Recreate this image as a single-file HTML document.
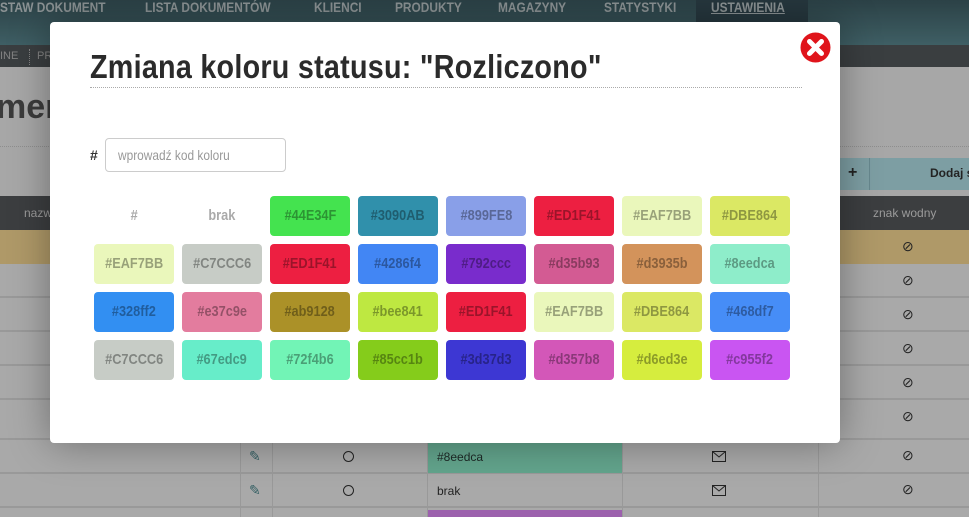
<!DOCTYPE html>
<html><head><meta charset="utf-8">
<style>
*{margin:0;padding:0;box-sizing:border-box}
html,body{width:969px;height:517px;overflow:hidden}
body{position:relative;background:#efefef;font-family:"Liberation Sans",sans-serif}
.abs{position:absolute}
.nav{left:0;top:0;width:969px;height:45px;background:linear-gradient(#3f5e65,#5a8890)}
.nav span{position:absolute;top:-3px;color:#c8d2d4;font-size:14px;font-weight:bold;transform:scaleX(.85);transform-origin:left;white-space:nowrap;line-height:20px}
.sub{left:0;top:45px;width:969px;height:22px;background:#54595c}
.row{left:0;width:969px;height:34px;border-bottom:2px solid #dcdcdc;background:#f2f2f2}
.vl{top:440px;width:1px;height:77px;background:#dcdcdc}
.modal{left:50px;top:22px;width:790px;height:421px;background:#fff;border-radius:4px;box-shadow:0 0 40px rgba(0,0,0,.35),0 0 0 1500px rgba(0,0,0,.3)}
h1{position:absolute;left:40px;top:26px;font-size:33px;color:#2b2b2b;font-weight:bold;transform:scaleX(.87);transform-origin:left;white-space:nowrap;letter-spacing:.3px}
.hr{left:40px;top:65px;width:712px;border-top:1px dotted #aaa}
.sw{position:absolute;width:80px;height:40px;border-radius:4px;text-align:center;line-height:40px;font-size:15px;font-weight:bold;color:rgba(0,0,0,.35);white-space:nowrap}
.sw b{display:inline-block;transform:scaleX(.85)}
.ic{position:absolute;color:#333;font-size:14px}
</style></head><body>
<div class="abs nav">
<span style="left:0">STAW DOKUMENT</span>
<span style="left:145px">LISTA DOKUMENTÓW</span>
<span style="left:314px">KLIENCI</span>
<span style="left:395px">PRODUKTY</span>
<span style="left:498px">MAGAZYNY</span>
<span style="left:604px">STATYSTYKI</span>
<div class="abs" style="left:696px;top:0;width:112px;height:22px;background:#37505a"></div>
<span style="left:711px;text-decoration:underline">USTAWIENIA</span>
</div>
<div class="abs sub"><span class="abs" style="left:0;top:5px;color:#bbb;font-size:11px">INE</span><div class="abs" style="left:29px;top:4px;height:16px;border-left:1px dotted #bbb"></div><span class="abs" style="left:37px;top:5px;color:#bbb;font-size:11px">PR</span></div>
<div class="abs" style="left:-4px;top:88px;font-size:34px;font-weight:bold;color:#555">ment</div>
<div class="abs" style="left:0;top:146px;width:969px;border-top:1px dotted #ccc"></div>
<div class="abs" style="left:840px;top:158px;width:129px;height:32px;background:#b4e2ea"></div>
<div class="abs" style="left:848px;top:164px;font-size:16px;font-weight:bold;color:#333">+</div>
<div class="abs" style="left:869px;top:158px;height:32px;border-left:1px solid #94c2ca"></div>
<div class="abs" style="left:930px;top:166px;font-size:12px;font-weight:bold;color:#333;white-space:nowrap">Dodaj s</div>
<div class="abs" style="left:0;top:196px;width:969px;height:34px;background:#56595c"></div>
<div class="abs" style="left:24px;top:206px;font-size:12px;color:#ddd">nazw</div>
<div class="abs" style="left:873px;top:206px;font-size:12px;color:#ddd">znak wodny</div>
<div class="abs" style="left:0;top:230px;width:969px;height:34px;background:#fbdc96"></div>
<div class="abs row" style="top:264px"></div><div class="abs row" style="top:298px"></div><div class="abs row" style="top:332px"></div><div class="abs row" style="top:366px"></div><div class="abs row" style="top:400px"></div><div class="abs row" style="top:406px;height:34px"></div>
<div class="abs row" style="top:440px"></div><div class="abs row" style="top:474px"></div><div class="abs row" style="top:508px;height:9px;border:0"></div>
<div class="abs" style="left:427px;top:440px;width:195px;height:33px;background:#8eedca"></div>
<div class="abs" style="left:427px;top:510px;width:195px;height:7px;background:#e08cf8"></div>
<div class="abs vl" style="left:240px"></div><div class="abs vl" style="left:272px"></div><div class="abs vl" style="left:427px"></div><div class="abs vl" style="left:622px"></div><div class="abs vl" style="left:818px"></div>
<div class="ic" style="left:249px;top:448px;color:#4d8a90">✎</div><div class="ic" style="left:249px;top:482px;color:#4d8a90">✎</div>
<div class="abs" style="left:343px;top:451px;width:11px;height:11px;border:1.5px solid #333;border-radius:50%"></div>
<div class="abs" style="left:343px;top:485px;width:11px;height:11px;border:1.5px solid #333;border-radius:50%"></div>
<div class="abs" style="left:437px;top:450px;font-size:12px;color:#2b3d38">#8eedca</div>
<div class="abs" style="left:437px;top:484px;font-size:12px;color:#333">brak</div>
<svg class="abs" style="left:712px;top:451px" width="14" height="11"><rect x=".5" y=".5" width="13" height="10" fill="none" stroke="#333"/><path d="M.5 .5L7 6L13.5 .5" fill="none" stroke="#333"/></svg>
<svg class="abs" style="left:712px;top:485px" width="14" height="11"><rect x=".5" y=".5" width="13" height="10" fill="none" stroke="#333"/><path d="M.5 .5L7 6L13.5 .5" fill="none" stroke="#333"/></svg>
<div class="ic" style="left:902px;top:238px">⊘</div><div class="ic" style="left:902px;top:272px">⊘</div><div class="ic" style="left:902px;top:306px">⊘</div><div class="ic" style="left:902px;top:340px">⊘</div><div class="ic" style="left:902px;top:374px">⊘</div><div class="ic" style="left:902px;top:408px">⊘</div><div class="ic" style="left:902px;top:447px">⊘</div><div class="ic" style="left:902px;top:481px">⊘</div>

<div class="abs modal">
<h1>Zmiana koloru statusu: "Rozliczono"</h1>
<div class="abs hr"></div>
<svg class="abs" style="left:750px;top:10px" width="31" height="31" viewBox="0 0 31 31"><circle cx="15.5" cy="15.5" r="15" fill="#e0141b"/><path d="M9.5 9.5L21.5 21.5M21.5 9.5L9.5 21.5" stroke="#fff" stroke-width="5" stroke-linecap="round"/></svg>
<div class="abs" style="left:40px;top:125px;font-size:14px;font-weight:bold;color:#333">#</div>
<div class="abs" style="left:55px;top:116px;width:181px;height:34px;border:1px solid #ccc;border-radius:4px;font-size:14px;color:#999;padding:8px 12px;white-space:nowrap"><span style="display:inline-block;transform:scaleX(.85);transform-origin:left">wprowadź kod koloru</span></div>
</div>
<div class="sw" style="left:94px;top:196px;color:#aaa"><b>#</b></div>
<div class="sw" style="left:182px;top:196px;color:#aaa"><b>brak</b></div>
<div class="sw" style="left:270px;top:196px;background:#44E34F"><b>#44E34F</b></div>
<div class="sw" style="left:358px;top:196px;background:#3090AB"><b>#3090AB</b></div>
<div class="sw" style="left:446px;top:196px;background:#899FE8"><b>#899FE8</b></div>
<div class="sw" style="left:534px;top:196px;background:#ED1F41"><b>#ED1F41</b></div>
<div class="sw" style="left:622px;top:196px;background:#EAF7BB"><b>#EAF7BB</b></div>
<div class="sw" style="left:710px;top:196px;background:#DBE864"><b>#DBE864</b></div>
<div class="sw" style="left:94px;top:244px;background:#EAF7BB"><b>#EAF7BB</b></div>
<div class="sw" style="left:182px;top:244px;background:#C7CCC6"><b>#C7CCC6</b></div>
<div class="sw" style="left:270px;top:244px;background:#ED1F41"><b>#ED1F41</b></div>
<div class="sw" style="left:358px;top:244px;background:#4286f4"><b>#4286f4</b></div>
<div class="sw" style="left:446px;top:244px;background:#792ccc"><b>#792ccc</b></div>
<div class="sw" style="left:534px;top:244px;background:#d35b93"><b>#d35b93</b></div>
<div class="sw" style="left:622px;top:244px;background:#d3935b"><b>#d3935b</b></div>
<div class="sw" style="left:710px;top:244px;background:#8eedca"><b>#8eedca</b></div>
<div class="sw" style="left:94px;top:292px;background:#328ff2"><b>#328ff2</b></div>
<div class="sw" style="left:182px;top:292px;background:#e37c9e"><b>#e37c9e</b></div>
<div class="sw" style="left:270px;top:292px;background:#ab9128"><b>#ab9128</b></div>
<div class="sw" style="left:358px;top:292px;background:#bee841"><b>#bee841</b></div>
<div class="sw" style="left:446px;top:292px;background:#ED1F41"><b>#ED1F41</b></div>
<div class="sw" style="left:534px;top:292px;background:#EAF7BB"><b>#EAF7BB</b></div>
<div class="sw" style="left:622px;top:292px;background:#DBE864"><b>#DBE864</b></div>
<div class="sw" style="left:710px;top:292px;background:#468df7"><b>#468df7</b></div>
<div class="sw" style="left:94px;top:340px;background:#C7CCC6"><b>#C7CCC6</b></div>
<div class="sw" style="left:182px;top:340px;background:#67edc9"><b>#67edc9</b></div>
<div class="sw" style="left:270px;top:340px;background:#72f4b6"><b>#72f4b6</b></div>
<div class="sw" style="left:358px;top:340px;background:#85cc1b"><b>#85cc1b</b></div>
<div class="sw" style="left:446px;top:340px;background:#3d37d3"><b>#3d37d3</b></div>
<div class="sw" style="left:534px;top:340px;background:#d357b8"><b>#d357b8</b></div>
<div class="sw" style="left:622px;top:340px;background:#d6ed3e"><b>#d6ed3e</b></div>
<div class="sw" style="left:710px;top:340px;background:#c955f2"><b>#c955f2</b></div>
</body></html>
